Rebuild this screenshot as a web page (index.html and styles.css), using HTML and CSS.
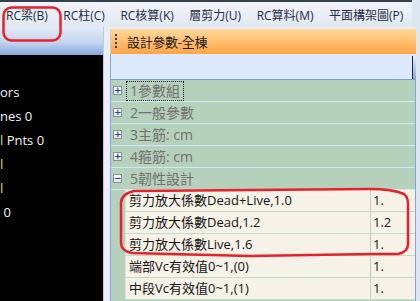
FILE: index.html
```html
<!DOCTYPE html>
<html lang="zh-Hant">
<head>
    <meta charset="UTF-8">
    <title>設計參數-全棟</title>
    <link rel="stylesheet" href="styles.css">
</head>
<body>
    <div class="app">
        <div class="topline"></div>
        <div class="menubar">
            <span class="menu-item">RC梁(B)</span>
            <span class="menu-item">RC柱(C)</span>
            <span class="menu-item">RC核算(K)</span>
            <span class="menu-item">層剪力(U)</span>
            <span class="menu-item">RC算料(M)</span>
            <span class="menu-item">平面構架圖(P)</span>
        </div>
        <div class="main">
            <div class="left">
                <div class="left-head"></div>
                <div class="console">
                    <div class="line">ors</div>
                    <div class="line">nes 0</div>
                    <div class="line"><span class="cut">l</span> Pnts 0</div>
                    <div class="line"><span class="cut">l</span></div>
                    <div class="line"><span class="cut">l</span></div>
                    <div class="line">&nbsp;0</div>
                </div>
            </div>
            <div class="splitter"></div>
            <div class="panel">
                <div class="panel-head">
                    <span class="grip"></span>
                    <span class="title">設計參數-全棟</span>
                </div>
                <div class="toolbar">
                    <div class="scroll-tab"></div>
                </div>
                <div class="grid">
                    <div class="cat">
                        <span class="box">+</span>
                        <span class="cat-label focus">1參數組</span>
                    </div>
                    <div class="cat">
                        <span class="box">+</span>
                        <span class="cat-label">2一般參數</span>
                    </div>
                    <div class="cat">
                        <span class="box">+</span>
                        <span class="cat-label">3主筋: cm</span>
                    </div>
                    <div class="cat">
                        <span class="box">+</span>
                        <span class="cat-label">4箍筋: cm</span>
                    </div>
                    <div class="cat">
                        <span class="box">−</span>
                        <span class="cat-label">5韌性設計</span>
                    </div>
                    <div class="prop">
                        <div class="name">剪力放大係數Dead+Live,1.0</div>
                        <div class="val">1.</div>
                    </div>
                    <div class="prop">
                        <div class="name">剪力放大係數Dead,1.2</div>
                        <div class="val">1.2</div>
                    </div>
                    <div class="prop">
                        <div class="name">剪力放大係數Live,1.6</div>
                        <div class="val">1.</div>
                    </div>
                    <div class="prop">
                        <div class="name">端部Vc有效值0~1,(0)</div>
                        <div class="val">1.</div>
                    </div>
                    <div class="prop">
                        <div class="name">中段Vc有效值0~1,(1)</div>
                        <div class="val">1.</div>
                    </div>
                </div>
            </div>
        </div>
    </div>

    <!-- red marks drawn over the screenshot -->
    <svg class="marks" width="420" height="301" viewBox="0 0 420 301">
        <rect x="3.5" y="7.5" width="57" height="33" rx="8" ry="8"/>
        <path d="M134 191 L370 189 Q392 189 404 194 Q408 197 408 204 L408 244 Q408 252 398 254 L372 254 L250 256 L132 253 Q121 251 121 243 L121 203 Q121 194 134 191 Z"/>
    </svg>
</body>
</html>
```

FILE: styles.css
```css
body {
    margin: 0;
    width: 420px;
    height: 301px;
    overflow: hidden;
    background-color: #dde7f4;
    font-family: "Open Sans", "Noto Sans CJK TC", sans-serif;
    position: relative;
}
.app {
    width: 416px;
    height: 301px;
    display: flex;
    flex-direction: column;
}
.topline {
    height: 2px;
    background-color: #36404d;
    margin-right: 4px;
}
.menubar {
    height: 25px;
    margin-right: 4px;
    display: flex;
    align-items: center;
    background: linear-gradient(#f1f4f9, #e2e8f1);
    font-size: 12px;
    color: #1d2c44;
}
.menu-item {
    padding-left: 6px;
    padding-right: 9.5px;
    white-space: nowrap;
}
.main {
    flex: 1;
    display: flex;
    min-height: 0;
}
.left {
    width: 103px;
    display: flex;
    flex-direction: column;
}
.left-head {
    height: 28px;
    background: linear-gradient(#e3ebf7, #c3d5ee 55%, #86a9dd);
}
.console {
    flex: 1;
    background-color: #000;
    color: #f4f4f4;
    font-size: 13px;
    padding-top: 27px;
    overflow: hidden;
}
.console .line {
    height: 24px;
    line-height: 20px;
    white-space: nowrap;
}
.console .cut {
    color: #e8cf8a;
}
.splitter {
    width: 6px;
    background-color: #e9eef5;
    border-left: 1px solid #c3cbd6;
}
.panel {
    flex: 1;
    display: flex;
    flex-direction: column;
    padding-top: 2px;
    background-color: #e8eef6;
}
.panel-head {
    height: 25px;
    display: flex;
    align-items: center;
    background: linear-gradient(#ffd99c, #ffb866 60%, #ffa345);
    border-left: 1px solid #f0c89a;
}
.grip {
    width: 2px;
    height: 16px;
    margin-left: 4px;
    margin-right: 10px;
    background: repeating-linear-gradient(#2a3f78 0 2px, transparent 2px 4px);
}
.title {
    font-size: 13px;
    color: #1a1a1a;
    letter-spacing: -0.3px;
}
.toolbar {
    height: 25px;
    display: flex;
    justify-content: flex-end;
    background-color: #dde9fc;
    border-left: 1px solid #8aa6d4;
    border-bottom: 1px solid #7c9fd6;
}
.scroll-tab {
    width: 3px;
    margin-top: 2px;
    border-left: 1px solid #1d2330;
    background: linear-gradient(#e4ebf6, #8ea9d8);
}
.grid {
    flex: 1;
    background-color: #b6d1bb;
    border-left: 1px solid #84a4d6;
    border-right: 1px solid #84a4d6;
    font-size: 13px;
}
.cat {
    height: 21px;
    display: flex;
    align-items: center;
    border-bottom: 1px solid #d6e5f4;
}
.box {
    width: 7px;
    height: 7px;
    margin-left: 2px;
    margin-right: 4px;
    border: 1px solid #8c8f95;
    background: linear-gradient(#ffffff, #dfe4ea);
    color: #27458f;
    font-size: 9px;
    font-weight: bold;
    line-height: 7px;
    text-align: center;
    font-family: "DejaVu Sans", sans-serif;
}
.cat-label {
    color: #6f6f6f;
    font-size: 14px;
    padding: 0 3px;
    line-height: 18px;
    border: 1px dotted transparent;
}
.focus {
    border-color: #1a1a1a;
}
.prop {
    height: 21px;
    display: flex;
    margin-left: 14px;
    background-color: #f6f2e7;
    border-bottom: 1px solid #c2dbc4;
    border-left: 1px solid #d9e6d8;
    color: #141414;
    line-height: 21px;
}
.prop .name {
    width: 241px;
    padding-left: 3px;
    white-space: nowrap;
    overflow: hidden;
    border-right: 1px solid #b9d4bc;
}
.prop .val {
    flex: 1;
    padding-left: 2px;
}
.marks {
    position: absolute;
    left: 0;
    top: 0;
    pointer-events: none;
}
.marks rect,
.marks path {
    fill: none;
    stroke: #e8202a;
    stroke-width: 2.5;
}
```
